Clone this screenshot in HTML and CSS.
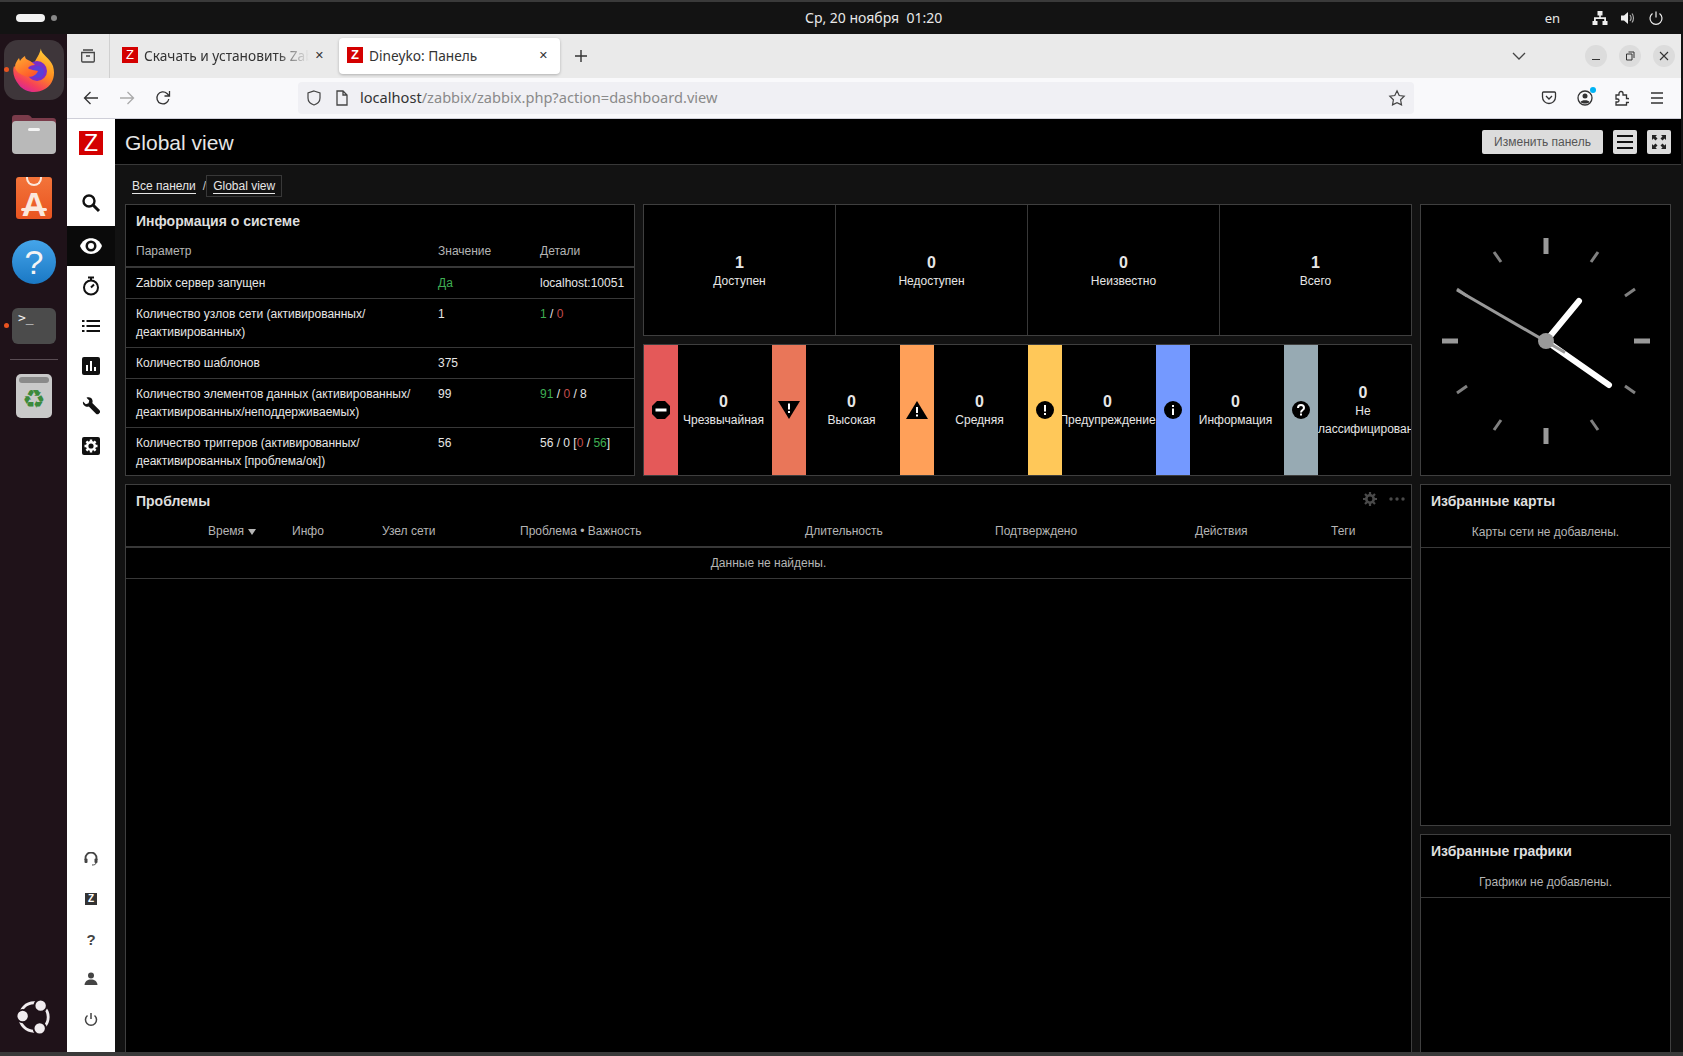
FILE: index.html
```html
<!DOCTYPE html>
<html lang="ru">
<head>
    <meta charset="UTF-8">
    <title>Dineyko: Панель</title>
    <link rel="stylesheet" href="styles.css">
</head>
<body>
    <div class="topbar">
        <div class="activities"><span class="pill"></span><span class="dot"></span></div>
        <div class="datetime">Ср, 20 ноября&nbsp; 01:20</div>
        <div class="tray">
            <span class="lang">en</span>
            <svg class="tray-net" width="16" height="16" viewBox="0 0 16 16"><path fill="#eee" d="M5.500 1h5v4.500H8.800V7.200H14V11h1.500v4h-5v-4H12.200V9H3.800v2H5.500v4h-5v-4H2V7.200h5.200V5.500H5.500z"/></svg>
            <svg class="tray-vol" width="16" height="16" viewBox="0 0 16 16"><path fill="#eee" d="M1 5.500h3L8 2v12l-4-3.500H1z"/><path fill="none" stroke="#aaa" stroke-width="1.200" d="M10 5c1.200 1.600 1.200 4.400 0 6M12 3.500c2 2.500 2 6.500 0 9"/></svg>
            <svg class="tray-pow" width="16" height="16" viewBox="0 0 16 16"><path fill="none" stroke="#eee" stroke-width="1.200" d="M8 1.500v6M4.500 3.500a6 6 0 1 0 7 0"/></svg>
        </div>
    </div>
    <div class="desktop">
        <aside class="dock">
            <div class="dock-item active running">
                <svg width="46" height="46" viewBox="0 0 46 46">
                    <defs>
                        <linearGradient id="fx1" x1="0.8" y1="0" x2="0.3" y2="1"><stop offset="0" stop-color="#ffd53a"/><stop offset="0.5" stop-color="#ff8a1f"/><stop offset="0.8" stop-color="#f5405a"/><stop offset="1" stop-color="#d6249a"/></linearGradient>
                        <linearGradient id="fx2" x1="0" y1="0" x2="0.6" y2="1"><stop offset="0" stop-color="#ffb030"/><stop offset="1" stop-color="#ff5a2a"/></linearGradient>
                    </defs>
                    <path fill="url(#fx1)" d="M30 1c-1 6 9 10 12 18 3 10-1 19-8 23-8 5-20 4-26-4C3 32 1 25 3 19c1 1 2 2 3 2 3-3 12-6 16-3 3-6 7-11 8-17z"/>
                    <circle cx="26" cy="24" r="10" fill="#7a2fc8"/>
                    <circle cx="27" cy="25" r="6" fill="#5a3fd8"/>
                    <path fill="url(#fx2)" d="M4 20c0-4 2-6 4-9l1 3c1-2 3-4 5-5 0 2 1 3 3 4 3 1 5 3 7 5-3 0-6 1-7 3 2 2 7 2 10 3-2 5-8 7-13 5-5-2-9-4-10-9z"/>
                </svg>
            </div>
            <div class="dock-item">
                <svg width="44" height="44" viewBox="0 0 44 44">
                    <path fill="#7a3b4a" d="M0 6q0-3 3-3h13q2 0 4 3h21q3 0 3 3v8H0z"/>
                    <rect y="9" width="44" height="33" rx="4" fill="#b9b9b9"/>
                    <rect x="16" y="16" width="12" height="3" rx="1.500" fill="#f4f4f4"/>
                </svg>
            </div>
            <div class="dock-item">
                <div class="store-icon"><span class="store-handle"></span>A<span class="store-bar"></span></div>
            </div>
            <div class="dock-item"><div class="help-icon">?</div></div>
            <div class="dock-item running">
                <div class="term-icon">&gt;_</div>
            </div>
            <div class="dock-sep"></div>
            <div class="dock-item">
                <div class="trash-icon">
                    <span class="trash-lid"></span>
                    <span class="trash-mark">♻</span>
                </div>
            </div>
            <div class="dock-logo">
                <svg width="36" height="36" viewBox="0 0 38 38">
                    <circle cx="19" cy="19" r="15" fill="none" stroke="#f1ecef" stroke-width="3"/>
                    <circle cx="7" cy="18" r="6.500" fill="#f1ecef" stroke="#1f1219" stroke-width="2"/>
                    <circle cx="26" cy="7" r="6.500" fill="#f1ecef" stroke="#1f1219" stroke-width="2"/>
                    <circle cx="25" cy="31" r="6.500" fill="#f1ecef" stroke="#1f1219" stroke-width="2"/>
                </svg>
            </div>
        </aside>
        <div class="browser">
            <div class="tabbar">
                <div class="tabs-list">
                    <svg width="16" height="16" viewBox="0 0 16 16"><path fill="none" stroke="#444" stroke-width="1.300" d="M3 2h10M1.700 4.500h12.600v8.500q0 1-1 1H2.700q-1 0-1-1zM6 8h4"/></svg>
                </div>
                <div class="tab">
                    <span class="favicon thin">Z</span>
                    <span class="tab-title">Скачать и установить Zabbix</span>
                    <span class="tab-close">✕</span>
                </div>
                <div class="tab active">
                    <span class="favicon">Z</span>
                    <span class="tab-title">Dineyko: Панель</span>
                    <span class="tab-close">✕</span>
                </div>
                <svg class="tab-new" width="14" height="14" viewBox="0 0 14 14"><path stroke="#333" stroke-width="1.400" d="M7 1v12M1 7h12"/></svg>
                <svg class="tab-more" width="16" height="16" viewBox="0 0 16 16"><path fill="none" stroke="#444" stroke-width="1.300" d="M2 5l6 6 6-6"/></svg>
                <div class="win-buttons">
                    <span class="win-btn"><svg width="10" height="10" viewBox="0 0 10 10"><path stroke="#333" d="M1 8.500h8"/></svg></span>
                    <span class="win-btn"><svg width="10" height="10" viewBox="0 0 10 10"><path fill="none" stroke="#333" d="M1.500 3h5.500v6h-5.500zM3.500 1h5.500v6"/></svg></span>
                    <span class="win-btn"><svg width="10" height="10" viewBox="0 0 10 10"><path stroke="#333" stroke-width="1.100" d="M1 1l8 8M9 1l-8 8"/></svg></span>
                </div>
            </div>
            <div class="navbar">
                <svg class="nav-btn" width="16" height="16" viewBox="0 0 16 16"><path fill="none" stroke="#333" stroke-width="1.300" d="M15 8H1.500M7.500 2l-6 6 6 6"/></svg>
                <svg class="nav-btn" width="16" height="16" viewBox="0 0 16 16"><path fill="none" stroke="#aaa" stroke-width="1.300" d="M1 8h13.500M8.500 2l6 6-6 6"/></svg>
                <svg class="nav-btn" width="16" height="16" viewBox="0 0 16 16"><path fill="none" stroke="#333" stroke-width="1.300" d="M13.800 9A6 6 0 1 1 12 3.500L14 5.500M14.500 1v5h-5"/></svg>
                <div class="urlbar">
                    <svg width="16" height="16" viewBox="0 0 16 16"><path fill="none" stroke="#444" stroke-width="1.200" d="M8 1l6 2v5c0 3.500-3 6-6 7-3-1-6-3.500-6-7V3z"/></svg>
                    <svg class="url-doc" width="14" height="16" viewBox="0 0 14 16"><path fill="none" stroke="#444" stroke-width="1.300" d="M2 1h6l4 4v10H2zM8 1v4h4"/></svg>
                    <span class="url-text"><b>localhost</b>/zabbix/zabbix.php?action=dashboard.view</span>
                    <svg class="url-star" width="18" height="18" viewBox="0 0 18 18"><path fill="none" stroke="#444" stroke-width="1.200" d="M9 1.800l2.200 4.700 5 .7-3.600 3.600.9 5.100L9 13.600l-4.500 2.300.9-5.100L1.800 7.200l5-.7z"/></svg>
                </div>
                <div class="nav-right">
                    <svg width="16" height="16" viewBox="0 0 16 16"><path fill="none" stroke="#333" stroke-width="1.300" d="M2.500 2h11q1 0 1 1v4a6.500 6.500 0 0 1-13 0V3q0-1 1-1zM5 6l3 3 3-3"/></svg>
                    <span class="account">
                        <svg width="16" height="16" viewBox="0 0 16 16"><circle cx="8" cy="8" r="7" fill="none" stroke="#333" stroke-width="1.300"/><circle cx="8" cy="6" r="2.500" fill="#333"/><path fill="#333" d="M3.500 12c1-2.500 8-2.500 9 0-2 2-7 2-9 0z"/></svg>
                        <span class="account-dot"></span>
                    </span>
                    <svg width="16" height="16" viewBox="0 0 16 16"><path fill="none" stroke="#333" stroke-width="1.300" d="M6 5V3.500a2 2 0 0 1 4 0V5h3.500v3.500H15a2 2 0 0 1 0 4h-1.500V15H3V12h1.500a1.500 1.500 0 0 0 0-3H3V5z"/></svg>
                    <svg width="16" height="16" viewBox="0 0 16 16"><path stroke="#333" stroke-width="1.300" d="M2 3h12M2 8h12M2 13h12"/></svg>
                </div>
            </div>
            <div class="app">
                <nav class="sidebar">
                    <div class="logo">Z</div>
                    <ul class="menu">
                        <li class="first">
                            <svg width="20" height="20" viewBox="0 0 20 20"><circle cx="8" cy="8" r="5.500" fill="none" stroke="#111" stroke-width="2.400"/><path stroke="#111" stroke-width="3" d="M12 12l6 6"/></svg>
                        </li>
                        <li class="selected">
                            <svg width="22" height="16" viewBox="0 0 22 16"><path fill="#fff" d="M0 8c4-10.500 18-10.500 22 0-4 10.500-18 10.500-22 0z"/><circle cx="11" cy="8" r="5.500" fill="#111"/><circle cx="11" cy="8" r="3" fill="#fff"/></svg>
                        </li>
                        <li>
                            <svg width="18" height="20" viewBox="0 0 18 20"><circle cx="9" cy="11.500" r="7" fill="none" stroke="#111" stroke-width="2"/><path stroke="#111" stroke-width="2" d="M6 1.500h6M9 2v3M9 11.500l3-3"/></svg>
                        </li>
                        <li>
                            <svg width="18" height="12" viewBox="0 0 18 12"><path stroke="#111" stroke-width="2" d="M0 1h2.500M4.500 1H18M0 6h2.500M4.500 6H18M0 11h2.500M4.500 11H18"/></svg>
                        </li>
                        <li>
                            <svg width="18" height="18" viewBox="0 0 18 18"><rect width="18" height="18" rx="2" fill="#111"/><path fill="#fff" d="M4 8h2v6H4zM8 4h2v10H8zM12 10h2v4h-2z"/></svg>
                        </li>
                        <li>
                            <svg width="18" height="18" viewBox="0 0 18 18"><path fill="#111" d="M1 4.500L3.800 7.300 6.500 6.200 7.300 3.600 4.500.8C7-.4 10 .8 10.500 3.500c.2.900.1 1.700-.2 2.500l7.200 7.200c.8.800.8 2 0 2.800l-.7.700c-.8.800-2 .8-2.800 0L6.800 9.500C3.800 10.500.3 8 1 4.500z"/></svg>
                        </li>
                        <li>
                            <svg width="18" height="18" viewBox="0 0 18 18"><rect width="18" height="18" rx="2" fill="#111"/><circle cx="9" cy="9" r="3.800" fill="none" stroke="#fff" stroke-width="2.400"/><path stroke="#fff" stroke-width="2.400" d="M9 2.500v2.500M9 13v2.500M2.500 9H5M13 9h2.500M4.400 4.400l1.800 1.800M11.800 11.800l1.800 1.800M13.600 4.400l-1.800 1.800M6.200 11.800l-1.800 1.800"/></svg>
                        </li>
                    </ul>
                    <ul class="menu bottom">
                        <li>
                            <svg width="14" height="14" viewBox="0 0 14 14"><path fill="none" stroke="#444" stroke-width="1.800" d="M1.500 8V6a5.500 5.500 0 0 1 11 0v2"/><rect x="0.500" y="6.500" width="3" height="4.500" rx="1" fill="#444"/><rect x="10.500" y="6.500" width="3" height="4.500" rx="1" fill="#444"/><path fill="none" stroke="#444" d="M12 11c0 1.500-2 2-4 2"/></svg>
                        </li>
                        <li><span class="z-mini">Z</span></li>
                        <li><span class="q-mini">?</span></li>
                        <li>
                            <svg width="14" height="14" viewBox="0 0 14 14"><circle cx="7" cy="3.500" r="3" fill="#444"/><path fill="#444" d="M0.500 13c.5-4 3-5.500 6.500-5.500s6 1.500 6.500 5.500z"/></svg>
                        </li>
                        <li>
                            <svg width="14" height="14" viewBox="0 0 14 14"><path fill="none" stroke="#444" stroke-width="1.500" d="M7 1v6M3.500 3.500a5.500 5.500 0 1 0 7 0"/></svg>
                        </li>
                    </ul>
                </nav>
                <main class="content">
                    <header class="page-header">
                        <h1>Global view</h1>
                        <div class="page-actions">
                            <button class="btn-edit">Изменить панель</button>
                            <button class="btn-icon">
                                <svg width="16" height="14" viewBox="0 0 16 14"><path stroke="#111" stroke-width="2" d="M0 1h16M0 7h16M0 13h16"/></svg>
                            </button>
                            <button class="btn-icon">
                                <svg width="14" height="14" viewBox="0 0 14 14"><path fill="#222" d="M0 0h5L3.500 1.500 5.500 3.500 3.500 5.500 1.500 3.500 0 5zM14 0v5L12.500 3.500 10.500 5.500 8.500 3.500 10.500 1.500 9 0zM0 14V9l1.500 1.500 2-2 2 2-2 2L5 14zM14 14H9l1.500-1.500-2-2 2-2 2 2L14 9z"/></svg>
                            </button>
                        </div>
                    </header>
                    <div class="breadcrumbs">
                        <a class="crumb">Все панели</a>
                        <span class="crumb-sep">/</span>
                        <span class="crumb-box"><a class="crumb">Global view</a></span>
                    </div>
                    <div class="dashboard">
                        <section class="widget sysinfo">
                            <div class="widget-head"><h4>Информация о системе</h4></div>
                            <table class="info-table">
                                <thead>
                                    <tr><th class="col-param">Параметр</th><th class="col-value">Значение</th><th>Детали</th></tr>
                                </thead>
                                <tbody>
                                    <tr><td>Zabbix сервер запущен</td><td class="green">Да</td><td>localhost:10051</td></tr>
                                    <tr><td>Количество узлов сети (активированных/<br>деактивированных)</td><td>1</td><td><span class="green">1</span> / <span class="red">0</span></td></tr>
                                    <tr><td>Количество шаблонов</td><td>375</td><td></td></tr>
                                    <tr><td>Количество элементов данных (активированных/<br>деактивированных/неподдерживаемых)</td><td>99</td><td><span class="green">91</span> / <span class="red">0</span> / 8</td></tr>
                                    <tr><td>Количество триггеров (активированных/<br>деактивированных [проблема/ок])</td><td>56</td><td>56 / 0 [<span class="red">0</span> / <span class="green">56</span>]</td></tr>
                                </tbody>
                            </table>
                        </section>
                        <section class="widget hosts">
                            <div class="host-cell"><b>1</b><span>Доступен</span></div>
                            <div class="host-cell"><b>0</b><span>Недоступен</span></div>
                            <div class="host-cell"><b>0</b><span>Неизвестно</span></div>
                            <div class="host-cell"><b>1</b><span>Всего</span></div>
                        </section>
                        <section class="widget clock">
                            <svg width="250" height="270" viewBox="-125 -136 250 270">
                                <g stroke="#999" stroke-width="5">
                                    <path d="M0-103V-87M0 103V87M-104 0H-88M104 0H88"/>
                                </g>
                                <g stroke="#808080" stroke-width="3">
                                    <path d="M52-89L45-79M89-52L79-45M89 52L79 45M52 89L45 79M-52 89L-45 79M-89 52L-79 45M-89-52L-79-45M-52-89L-45-79" />
                                </g>
                                <line x1="0" y1="0" x2="33" y2="-40" stroke="#fff" stroke-width="6" stroke-linecap="round"/>
                                <line x1="0" y1="0" x2="63" y2="44" stroke="#fff" stroke-width="6" stroke-linecap="round"/>
                                <line x1="-89" y1="-51" x2="19" y2="11.500" stroke="#999" stroke-width="3"/>
                                <circle r="8" fill="#999"/>
                            </svg>
                        </section>
                        <section class="widget severities">
                            <div class="sev">
                                <div class="sev-bar disaster">
                                    <svg width="20" height="20" viewBox="0 0 20 20"><path fill="#000" d="M6 1h8l5 5v8l-5 5H6l-5-5V6z"/><rect x="4.500" y="8.500" width="11" height="3" fill="#fff"/></svg>
                                </div>
                                <div class="sev-text"><b>0</b><span>Чрезвычайная</span></div>
                            </div>
                            <div class="sev">
                                <div class="sev-bar high">
                                    <svg width="22" height="20" viewBox="0 0 22 20"><path fill="#000" d="M0 1h22L11 19z"/><path stroke="#fff" stroke-width="2" d="M11 3.500v6M11 11v2"/></svg>
                                </div>
                                <div class="sev-text"><b>0</b><span>Высокая</span></div>
                            </div>
                            <div class="sev">
                                <div class="sev-bar average">
                                    <svg width="22" height="20" viewBox="0 0 22 20"><path fill="#000" d="M11 1l11 18H0z"/><path stroke="#fff" stroke-width="2" d="M11 7v6M11 14.500v2"/></svg>
                                </div>
                                <div class="sev-text"><b>0</b><span>Средняя</span></div>
                            </div>
                            <div class="sev">
                                <div class="sev-bar warning">
                                    <svg width="18" height="18" viewBox="0 0 18 18"><circle cx="9" cy="9" r="9" fill="#000"/><path stroke="#fff" stroke-width="2" d="M9 4v6.500M9 12v2"/></svg>
                                </div>
                                <div class="sev-text"><b>0</b><span>Предупреждение</span></div>
                            </div>
                            <div class="sev">
                                <div class="sev-bar info">
                                    <svg width="18" height="18" viewBox="0 0 18 18"><circle cx="9" cy="9" r="9" fill="#000"/><path stroke="#fff" stroke-width="2" d="M9 4v2M9 7.500V14"/></svg>
                                </div>
                                <div class="sev-text"><b>0</b><span>Информация</span></div>
                            </div>
                            <div class="sev">
                                <div class="sev-bar notclass">
                                    <svg width="18" height="18" viewBox="0 0 18 18"><circle cx="9" cy="9" r="9" fill="#000"/><path fill="none" stroke="#fff" stroke-width="2" d="M6 7c0-4 6-4 6 0 0 2-3 2-3 4.500M9 12.500v2"/></svg>
                                </div>
                                <div class="sev-text"><b>0</b><span>Не</span><span>классифицирован</span></div>
                            </div>
                        </section>
                        <section class="widget problems">
                            <div class="widget-head">
                                <h4>Проблемы</h4>
                                <div class="widget-tools">
                                    <svg width="14" height="14" viewBox="0 0 14 14"><circle cx="7" cy="7" r="3.700" fill="none" stroke="#4a4a4a" stroke-width="2.600"/><path stroke="#4a4a4a" stroke-width="2.200" d="M7 0v3M7 11v3M0 7h3M11 7h3M2 2l2 2M10 10l2 2M12 2l-2 2M4 10l-2 2"/></svg>
                                    <svg width="16" height="4" viewBox="0 0 16 4"><g fill="#4a4a4a"><circle cx="2" cy="2" r="1.700"/><circle cx="8" cy="2" r="1.700"/><circle cx="14" cy="2" r="1.700"/></g></svg>
                                </div>
                            </div>
                            <div class="problem-cols">
                                <span></span>
                                <span>Время <i class="sort-arrow"></i></span>
                                <span>Инфо</span>
                                <span>Узел сети</span>
                                <span>Проблема • Важность</span>
                                <span>Длительность</span>
                                <span>Подтверждено</span>
                                <span>Действия</span>
                                <span>Теги</span>
                            </div>
                            <div class="no-data">Данные не найдены.</div>
                        </section>
                        <section class="widget favmaps">
                            <div class="widget-head"><h4>Избранные карты</h4></div>
                            <div class="no-data small">Карты сети не добавлены.</div>
                        </section>
                        <section class="widget favgraphs">
                            <div class="widget-head"><h4>Избранные графики</h4></div>
                            <div class="no-data small">Графики не добавлены.</div>
                        </section>
                    </div>
                </main>
            </div>
        </div>
    </div>
    <div class="bottom-strip"></div>
</body>
</html>
```

FILE: styles.css
```css
* {
    box-sizing: border-box;
}
html, body {
    height: 100%;
}
body {
    margin: 0;
    height: 1056px;
    overflow: hidden;
    display: flex;
    flex-direction: column;
    font-family: "Liberation Sans", Arial, sans-serif;
    font-size: 12px;
    background-color: #131313;
    color: #e6e6e6;
}

/* desktop top bar */
.topbar {
    height: 34px;
    flex: none;
    background-color: #131313;
    border-top: 2px solid #3a3a3a;
    display: flex;
    align-items: center;
    justify-content: space-between;
    font-family: "Noto Sans", sans-serif;
    color: #e8e8e8;
    font-size: 14px;
    position: relative;
}
.activities {
    display: flex;
    align-items: center;
    gap: 6px;
    padding-left: 16px;
}
.pill {
    width: 29px;
    height: 8px;
    border-radius: 4px;
    background-color: #f2f2f2;
}
.dot {
    width: 6px;
    height: 6px;
    border-radius: 50%;
    background-color: #888;
}
.datetime {
    position: absolute;
    left: 805px;
    top: 6px;
    font-size: 14px;
    white-space: nowrap;
}
.tray {
    display: flex;
    align-items: center;
    padding-right: 19px;
}
.lang {
    margin-right: 32px;
    font-size: 13px;
}
.tray-vol {
    margin-left: 12px;
}
.tray-pow {
    margin-left: 12px;
}

/* dock */
.desktop {
    flex: 1;
    display: flex;
    min-height: 0;
}
.dock {
    width: 67px;
    flex: none;
    background-color: #1f1219;
    padding: 6px 3px 0 4px;
    display: flex;
    flex-direction: column;
    gap: 4px;
}
.dock-item {
    height: 60px;
    flex: none;
    border-radius: 14px;
    display: flex;
    align-items: center;
    justify-content: center;
    position: relative;
}
.dock-item.active {
    background-color: #3e363a;
}
.dock-item.running::before {
    content: "";
    position: absolute;
    left: 0;
    top: 27px;
    width: 5px;
    height: 5px;
    border-radius: 50%;
    background-color: #e95420;
}
.store-icon {
    width: 36px;
    height: 42px;
    border-radius: 3px;
    background: linear-gradient(#f3743a, #e95420);
    color: #fbe8dc;
    font-size: 34px;
    font-weight: bold;
    line-height: 34px;
    padding-top: 10px;
    text-align: center;
    position: relative;
}
.store-handle {
    position: absolute;
    left: 10px;
    top: 0;
    width: 16px;
    height: 9px;
    border: 2px solid #fbe8dc;
    border-top: none;
    border-radius: 0 0 9px 9px;
}
.store-bar {
    position: absolute;
    left: 5px;
    right: 5px;
    top: 31px;
    height: 3px;
    border-radius: 2px;
    background-color: #fbe8dc;
}
.help-icon {
    width: 44px;
    height: 44px;
    border-radius: 50%;
    background: linear-gradient(#45a5ea, #1a78c4);
    color: #f4f4f4;
    font-size: 34px;
    line-height: 44px;
    text-align: center;
}
.term-icon {
    width: 44px;
    height: 36px;
    border-radius: 6px;
    background-color: #4b4b4b;
    color: #f0f0f0;
    font-family: "DejaVu Sans Mono", monospace;
    font-size: 13px;
    line-height: 14px;
    padding: 3px 6px;
}
.dock-sep {
    height: 1px;
    margin: -1px 6px 2px 6px;
    flex: none;
    background-color: #5a4d54;
}
.trash-icon {
    width: 36px;
    height: 44px;
    border-radius: 5px;
    background-color: #c9c9c9;
    padding: 3px;
    text-align: center;
}
.trash-lid {
    display: block;
    height: 6px;
    border-radius: 3px;
    background-color: #8a8a8a;
}
.trash-mark {
    font-family: "DejaVu Sans", sans-serif;
    color: #3c8a3c;
    font-size: 26px;
    line-height: 32px;
}
.dock-logo {
    margin-top: auto;
    margin-bottom: 17px;
    display: flex;
    justify-content: center;
}

/* browser chrome */
.browser {
    flex: 1;
    min-width: 0;
    display: flex;
    flex-direction: column;
    margin-right: 2px;
}
.tabbar {
    height: 44px;
    flex: none;
    background-color: #eaeaea;
    display: flex;
    align-items: center;
    font-family: "Noto Sans", sans-serif;
    font-size: 13.7px;
    color: #333;
}
.tabs-list {
    width: 43px;
    height: 44px;
    flex: none;
    border-right: 1px solid #d0d0d0;
    display: flex;
    align-items: center;
    justify-content: center;
}
.tab {
    width: 229px;
    height: 36px;
    display: flex;
    align-items: center;
    padding: 0 15px 2px 12px;
    flex: none;
}
.tab.active {
    width: 221px;
    background-color: #fff;
    border-radius: 4px;
    box-shadow: 0 1px 3px rgba(0, 0, 0, 0.25);
    padding: 0 12px 2px 8px;
}
.favicon {
    width: 16px;
    height: 16px;
    flex: none;
    background-color: #d40000;
    color: #fff;
    font-family: "Liberation Sans", sans-serif;
    font-size: 13px;
    font-weight: bold;
    line-height: 16px;
    text-align: center;
}
.favicon.thin {
    font-weight: normal;
}
.tab-title {
    flex: 1;
    margin-left: 6px;
    white-space: nowrap;
    overflow: hidden;
    -webkit-mask-image: linear-gradient(to right, #000 80%, transparent 100%);
    mask-image: linear-gradient(to right, #000 80%, transparent 100%);
}
.tab.active .tab-title {
    -webkit-mask-image: none;
    mask-image: none;
}
.tab-close {
    flex: none;
    font-size: 11px;
    font-family: "DejaVu Sans", sans-serif;
    margin-left: 6px;
}
.tab-new {
    margin-left: 14px;
}
.tab-more {
    margin-left: 923px;
}
.win-buttons {
    display: flex;
    gap: 12px;
    margin-left: 58px;
}
.win-btn {
    width: 22px;
    height: 22px;
    border-radius: 50%;
    background-color: #dcdcdc;
    display: flex;
    align-items: center;
    justify-content: center;
}
.navbar {
    height: 41px;
    flex: none;
    background-color: #f9f9fb;
    border-bottom: 1px solid #cfcfd8;
    display: flex;
    align-items: center;
    padding-left: 16px;
    gap: 20px;
}
.urlbar {
    width: 1116px;
    height: 32px;
    margin-left: 107px;
    background-color: #f0f0f4;
    border-radius: 4px;
    display: flex;
    align-items: center;
    padding: 0 8px;
    font-family: "Noto Sans", sans-serif;
    font-size: 14.6px;
    color: #8a8a8a;
}
.url-doc {
    margin-left: 13px;
}
.url-text {
    margin-left: 11px;
    padding-bottom: 2px;
}
.url-text b {
    font-weight: normal;
    color: #333;
}
.url-star {
    margin-left: auto;
}
.nav-right {
    display: flex;
    align-items: center;
    gap: 20px;
    margin-left: 107px;
}
.account {
    position: relative;
    display: flex;
}
.account-dot {
    position: absolute;
    right: -3px;
    top: -3px;
    width: 6px;
    height: 6px;
    border-radius: 50%;
    background-color: #00b3f4;
}

/* zabbix sidebar */
.app {
    flex: 1;
    min-height: 0;
    display: flex;
}
.sidebar {
    width: 48px;
    flex: none;
    background-color: #fff;
    display: flex;
    flex-direction: column;
    padding-bottom: 13px;
}
.logo {
    width: 24px;
    height: 24px;
    margin: 12px 0 0 12px;
    background-color: #d40000;
    color: #fff;
    font-size: 23px;
    line-height: 24px;
    text-align: center;
}
.menu {
    list-style: none;
    margin: 0;
    padding: 0;
}
.menu li {
    height: 40px;
    display: flex;
    align-items: center;
    justify-content: center;
}
.menu li.first {
    margin-top: 28px;
    height: 43px;
    padding-bottom: 3px;
}
.menu li.selected {
    background-color: #0a0a0a;
}
.menu.bottom {
    margin-top: auto;
}
.z-mini {
    width: 12px;
    height: 12px;
    background-color: #333;
    color: #fff;
    font-size: 10px;
    font-weight: bold;
    line-height: 12px;
    text-align: center;
}
.q-mini {
    color: #444;
    font-size: 15px;
    font-weight: bold;
}

/* page */
.content {
    flex: 1;
    min-width: 0;
    display: flex;
    flex-direction: column;
    background-color: #121212;
}
.page-header {
    height: 46px;
    flex: none;
    background-color: #000;
    border-bottom: 1px solid #383838;
    display: flex;
    align-items: center;
    justify-content: space-between;
    padding: 0 10px;
}
.page-header h1 {
    margin: 2px 0 0;
    font-size: 21px;
    font-weight: normal;
    color: #e6e6e6;
}
.page-actions {
    display: flex;
    gap: 10px;
}
.btn-edit, .btn-icon {
    height: 24px;
    border: none;
    border-radius: 2px;
    background-color: #dcdcdc;
    color: #555;
    font-family: "Liberation Sans", sans-serif;
    font-size: 12px;
    padding: 0;
    display: flex;
    align-items: center;
    justify-content: center;
}
.btn-edit {
    width: 121px;
}
.btn-icon {
    width: 24px;
}
.breadcrumbs {
    height: 39px;
    flex: none;
    padding: 10px 0 0 17px;
    display: flex;
    align-items: flex-start;
}
.crumb {
    color: #e6e6e6;
    border-bottom: 1px solid #e6e6e6;
    line-height: 14px;
    margin-top: 4px;
}
.crumb-sep {
    margin: 4px 0 0 7px;
    color: #ccc;
    line-height: 14px;
}
.crumb-box {
    height: 22px;
    padding: 0 6px;
    border: 1px solid #383838;
    display: flex;
    align-items: flex-start;
}
.crumb-box .crumb {
    margin-top: 3px;
}

/* dashboard */
.dashboard {
    flex: 1;
    min-height: 0;
    margin: 0 10px;
    display: grid;
    grid-template-columns: 510px 769px 251px;
    grid-template-rows: 132px 132px 342px 300px;
    gap: 8px;
    grid-template-areas:
        "sysinfo hosts clock"
        "sysinfo sev clock"
        "problems problems maps"
        "problems problems graphs";
    overflow: hidden;
}
.widget {
    background-color: #000;
    border: 1px solid #3f3f3f;
    min-width: 0;
    min-height: 0;
}
.widget-head {
    height: 32px;
    padding: 0 10px;
    display: flex;
    align-items: center;
    justify-content: space-between;
}
.widget-head h4 {
    margin: 0;
    font-size: 14px;
    font-weight: bold;
    color: #dedede;
}
.widget-tools {
    display: flex;
    align-items: center;
    gap: 12px;
    margin: -4px -4px 0 0;
}
.sysinfo {
    grid-area: sysinfo;
}
.hosts {
    grid-area: hosts;
    display: flex;
}
.clock {
    grid-area: clock;
}
.severities {
    grid-area: sev;
    display: flex;
}
.problems {
    grid-area: problems;
}
.favmaps {
    grid-area: maps;
}
.favgraphs {
    grid-area: graphs;
}

.info-table {
    width: 100%;
    border-collapse: collapse;
    table-layout: fixed;
    line-height: 18px;
}
.info-table th {
    height: 30px;
    padding: 0 10px 2px 10px;
    text-align: left;
    font-weight: normal;
    color: #b5b5b5;
    border-bottom: 2px solid #383838;
}
.info-table td {
    padding: 6px 10px;
    vertical-align: top;
    border-bottom: 1px solid #383838;
}
.info-table tr:last-child td {
    border-bottom: none;
}
.col-param {
    width: 302px;
}
.col-value {
    width: 102px;
}
.green {
    color: #3fae53;
}
.red {
    color: #c44c4c;
}

.host-cell {
    flex: 1;
    display: flex;
    flex-direction: column;
    align-items: center;
    justify-content: center;
    border-left: 1px solid #383838;
    padding-top: 2px;
}
.host-cell:first-child {
    border-left: none;
}
.host-cell b, .sev-text b {
    font-size: 16px;
    line-height: 19px;
}
.host-cell span, .sev-text span {
    line-height: 18px;
}

.sev {
    flex: 0 0 128px;
    min-width: 0;
    display: flex;
}
.sev:last-child {
    flex: 1;
}
.sev-bar {
    width: 34px;
    flex: none;
    display: flex;
    align-items: center;
    justify-content: center;
}
.disaster { background-color: #e45959; }
.high { background-color: #e97659; }
.average { background-color: #ffa059; }
.warning { background-color: #ffc859; }
.info { background-color: #7499ff; }
.notclass { background-color: #97aab3; }
.sev-text {
    flex: 1;
    min-width: 0;
    overflow: hidden;
    display: flex;
    flex-direction: column;
    align-items: center;
    justify-content: center;
    white-space: nowrap;
    padding: 1px 3px 0 0;
}

.problem-cols {
    height: 31px;
    padding: 0 0 2px 0;
    display: grid;
    grid-template-columns: 82px 84px 90px 138px 285px 190px 200px 136px 1fr;
    align-items: center;
    color: #b5b5b5;
    border-bottom: 2px solid #383838;
}
.sort-arrow {
    display: inline-block;
    width: 0;
    height: 0;
    border-left: 4px solid transparent;
    border-right: 4px solid transparent;
    border-top: 6px solid #b5b5b5;
    margin-left: 1px;
}
.no-data {
    height: 31px;
    display: flex;
    align-items: center;
    justify-content: center;
    color: #b5b5b5;
    border-bottom: 1px solid #383838;
}
.bottom-strip {
    height: 4px;
    flex: none;
    background-color: #3a3a3a;
}
```
